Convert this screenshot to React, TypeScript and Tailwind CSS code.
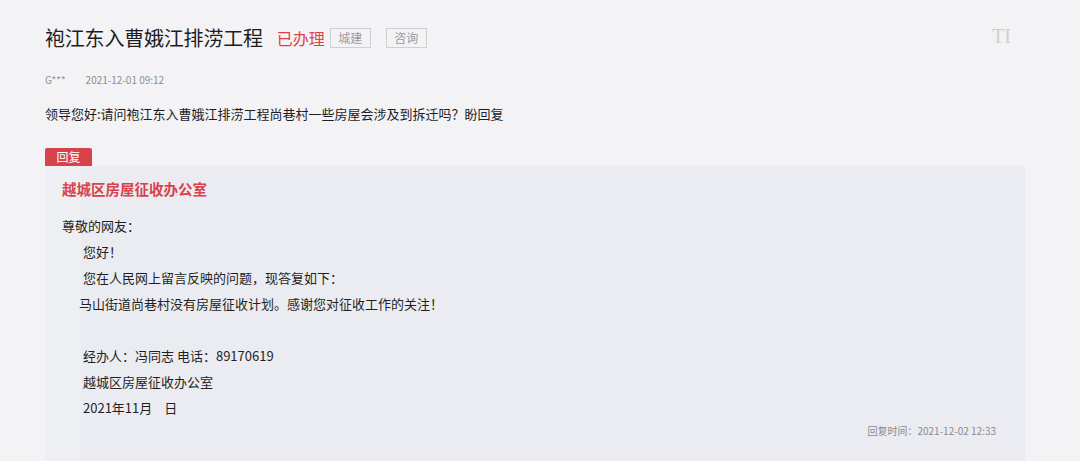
const font = { fontFamily: '"Noto Sans CJK SC", "Noto Sans", sans-serif' };

function Tag({ children }: { children: string }) {
  return (
    <span className="flex h-[20px] w-[41px] items-center justify-center border border-[#cfcfd3] text-[12px] leading-none text-[#9a9a9e]">
      {children}
    </span>
  );
}

export default function App() {
  const lines: { text: React.ReactNode; indent: string }[] = [
    { text: "尊敬的网友：", indent: "pl-0" },
    { text: "您好！", indent: "pl-[21px]" },
    { text: "您在人民网上留言反映的问题，现答复如下：", indent: "pl-[21px]" },
    { text: "马山街道尚巷村没有房屋征收计划。感谢您对征收工作的关注！", indent: "pl-[17px]" },
    { text: "\u00a0", indent: "pl-0" },
    { text: "经办人：冯同志 电话：89170619", indent: "pl-[21px]" },
    { text: "越城区房屋征收办公室", indent: "pl-[21px]" },
    {
      text: (
        <>
          2021年11月<span className="ml-[12px]">日</span>
        </>
      ),
      indent: "pl-[21px]",
    },
  ];

  return (
    <div className="relative h-[461px] w-[1080px] overflow-hidden bg-[#f3f2f5] pl-[45px] pt-[24px]" style={font}>
      <span className="absolute left-[992px] top-[26px] font-['Liberation_Serif',serif] text-[20px] leading-none text-[#cfcfd2]">
        TI
      </span>

      <div className="flex h-[28px] items-center">
        <h1 className="text-[20px] leading-[28px] font-normal tracking-[-0.2px] text-[#1d1d1f]">袍江东入曹娥江排涝工程</h1>
        <span className="ml-[14px] text-[16px] leading-none text-[#df3f47]">已办理</span>
        <div className="ml-[5px] flex gap-[15px]">
          <Tag>城建</Tag>
          <Tag>咨询</Tag>
        </div>
      </div>

      <div className="mt-[21px] flex h-[14px] items-center text-[10px] leading-none text-[#8e8e92]">
        <span>G***</span>
        <span className="ml-[20px]">2021-12-01 09:12</span>
      </div>

      <p className="mt-[16px] text-[13px] leading-[22px] text-[#1d1d1f]">
        领导您好:请问袍江东入曹娥江排涝工程尚巷村一些房屋会涉及到拆迁吗？盼回复
      </p>

      <div className="mt-[23px] flex h-[18px] w-[47px] items-center justify-center rounded-t-[2px] bg-[#d8424c] text-[12px] leading-none text-white">
        回复
      </div>

      <div className="flex h-[300px] w-[980px]">
        <div className="w-[36px] bg-[#eeeff3]" />
        <div className="flex-1 bg-[#ebecf1] pr-[29px]">
          <div className="-ml-[19px] pt-[13px]">
            <h2 className="text-[14.5px] leading-[20px] font-bold text-[#d8424c]">越城区房屋征收办公室</h2>
            <div className="mt-[14px] text-[13px] leading-[26px] text-[#1f1f22]">
              {lines.map((l, i) => (
                <p key={i} className={l.indent}>
                  {l.text}
                </p>
              ))}
            </div>
          </div>
          <p className="mt-[3px] text-right text-[10px] leading-[14px] text-[#8a8a8e]">回复时间：2021-12-02 12:33</p>
        </div>
      </div>
    </div>
  );
}
